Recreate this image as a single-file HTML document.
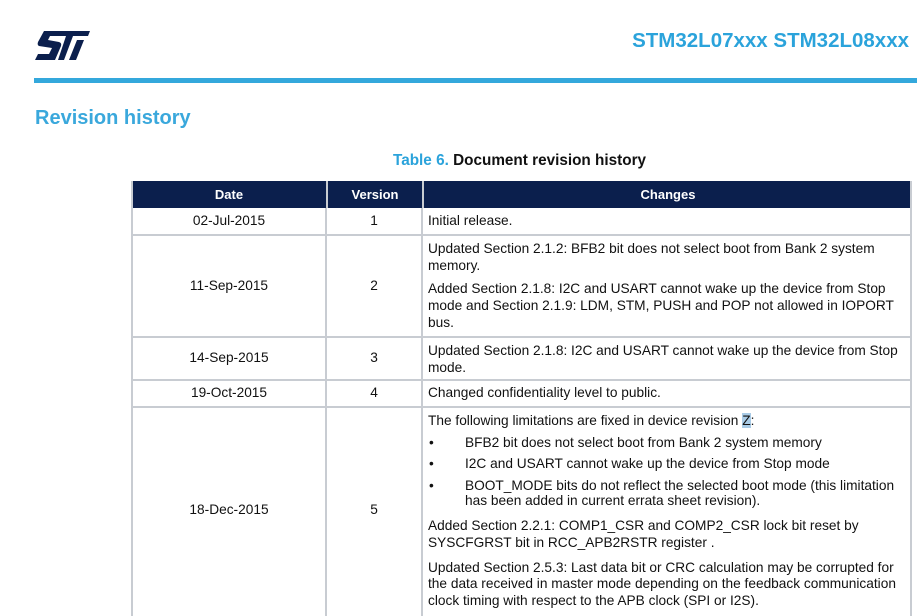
<!DOCTYPE html>
<html><head><meta charset="utf-8"><style>
*{margin:0;padding:0;box-sizing:border-box}
body{width:917px;height:616px;overflow:hidden;background:#fff;font-family:"Liberation Sans",Arial,sans-serif;position:relative;color:#111}
.a{position:absolute;white-space:nowrap}
.t{font-size:13.7px;line-height:16px}
.h{position:absolute;background:#0b1f4d;color:#fff;font-weight:bold;font-size:13px;text-align:center;line-height:27px;top:181px;height:27px}
.vl{position:absolute;width:2px;background:#c8ccd2}
.hl{position:absolute;height:2px;background:#c8ccd2;left:132px;width:780px}
</style></head><body>
<svg class="a" style="left:35px;top:31px" width="56" height="31" viewBox="0 0 56 31">
<path d="M9 0 H55 L53 5 H38 L29 29 H23 L31 5 H15 L13 9 L24 11 Q27 12 26 15 L20 29 H0 L3 23 H14 L17 17 L4 15 Q2 14 3 11 Z" fill="#0b1f4d"/>
<path d="M42 9 H49 L41 29 H34 Z" fill="#0b1f4d"/>
</svg>
<div class="a" style="right:8px;top:29px;font-size:20.5px;font-weight:bold;color:#2ba3db">STM32L07xxx STM32L08xxx</div>
<div class="a" style="left:34px;top:78px;width:883px;height:5px;background:#34a8dc"></div>
<div class="a" style="left:35px;top:107px;font-size:20px;font-weight:bold;color:#3aa8dc">Revision history</div>
<div class="a" style="left:393px;top:152px;font-size:15.3px;font-weight:bold"><span style="color:#2ba3db">Table 6.</span> Document revision history</div>

<div class="h" style="left:132px;width:194px">Date</div>
<div class="h" style="left:326px;width:96px;border-left:2px solid #c8ccd2">Version</div>
<div class="h" style="left:422px;width:490px;border-left:2px solid #c8ccd2">Changes</div>
<div class="vl" style="left:131px;top:181px;height:435px"></div>
<div class="vl" style="left:325px;top:208px;height:408px"></div>
<div class="vl" style="left:421px;top:208px;height:408px"></div>
<div class="vl" style="left:910px;top:181px;height:435px"></div>
<div class="hl" style="top:234px"></div>
<div class="hl" style="top:336px"></div>
<div class="hl" style="top:379px"></div>
<div class="hl" style="top:406px"></div>

<div class="a t" style="left:132px;width:194px;text-align:center;top:213px">02-Jul-2015</div>
<div class="a t" style="left:326px;width:96px;text-align:center;top:213px">1</div>
<div class="a t" style="left:428px;top:213px">Initial release.</div>

<div class="a t" style="left:132px;width:194px;text-align:center;top:278px">11-Sep-2015</div>
<div class="a t" style="left:326px;width:96px;text-align:center;top:278px">2</div>
<div class="a t" style="left:428px;top:241px">Updated Section 2.1.2: BFB2 bit does not select boot from Bank 2 system</div>
<div class="a t" style="left:428px;top:258px">memory.</div>
<div class="a t" style="left:428px;top:281px">Added Section 2.1.8: I2C and USART cannot wake up the device from Stop</div>
<div class="a t" style="left:428px;top:298px">mode and Section 2.1.9: LDM, STM, PUSH and POP not allowed in IOPORT</div>
<div class="a t" style="left:428px;top:315px">bus.</div>

<div class="a t" style="left:132px;width:194px;text-align:center;top:350px">14-Sep-2015</div>
<div class="a t" style="left:326px;width:96px;text-align:center;top:350px">3</div>
<div class="a t" style="left:428px;top:343px">Updated Section 2.1.8: I2C and USART cannot wake up the device from Stop</div>
<div class="a t" style="left:428px;top:360px">mode.</div>

<div class="a t" style="left:132px;width:194px;text-align:center;top:385px">19-Oct-2015</div>
<div class="a t" style="left:326px;width:96px;text-align:center;top:385px">4</div>
<div class="a t" style="left:428px;top:385px">Changed confidentiality level to public.</div>

<div class="a t" style="left:132px;width:194px;text-align:center;top:502px">18-Dec-2015</div>
<div class="a t" style="left:326px;width:96px;text-align:center;top:502px">5</div>
<div class="a t" style="left:428px;top:413px">The following limitations are fixed in device revision <span style="background:#a9cbe6">Z</span>:</div>
<div class="a t" style="left:429px;top:435px">•</div><div class="a t" style="left:465px;top:435px">BFB2 bit does not select boot from Bank 2 system memory</div>
<div class="a t" style="left:429px;top:456px">•</div><div class="a t" style="left:465px;top:456px">I2C and USART cannot wake up the device from Stop mode</div>
<div class="a t" style="left:429px;top:478px">•</div><div class="a t" style="left:465px;top:478px">BOOT_MODE bits do not reflect the selected boot mode (this limitation</div>
<div class="a t" style="left:465px;top:493px">has been added in current errata sheet revision).</div>
<div class="a t" style="left:428px;top:518px">Added Section 2.2.1: COMP1_CSR and COMP2_CSR lock bit reset by</div>
<div class="a t" style="left:428px;top:535px">SYSCFGRST bit in RCC_APB2RSTR register .</div>
<div class="a t" style="left:428px;top:560px">Updated Section 2.5.3: Last data bit or CRC calculation may be corrupted for</div>
<div class="a t" style="left:428px;top:576px">the data received in master mode depending on the feedback communication</div>
<div class="a t" style="left:428px;top:593px">clock timing with respect to the APB clock (SPI or I2S).</div>
</body></html>
